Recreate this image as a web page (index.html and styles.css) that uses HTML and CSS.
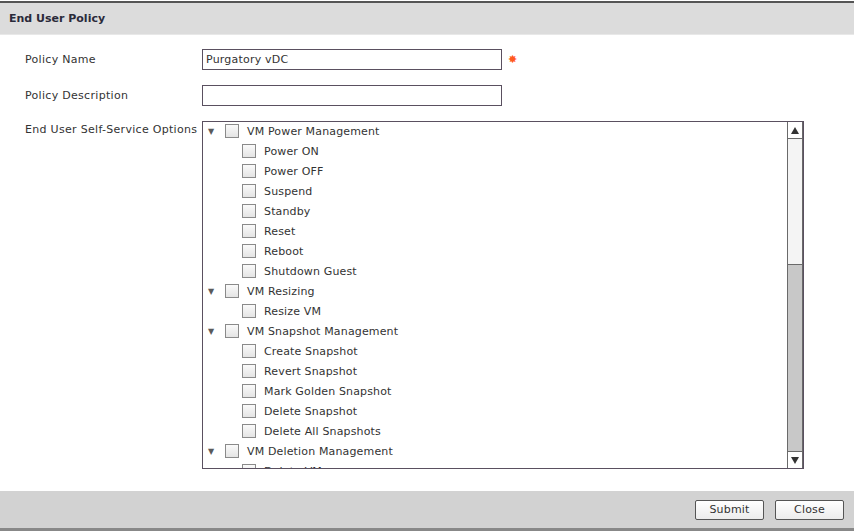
FILE: index.html
```html
<!DOCTYPE html>
<html>
<head>
<meta charset="utf-8">
<link rel="stylesheet" href="styles.css">
</head>
<body>
<div class="dialog">
  <div class="header">End User Policy</div>
  <div class="content">
    <div class="row">
      <label class="lbl">Policy Name</label>
      <input class="txt" type="text" value="Purgatory vDC">
      <span class="req">&#x2738;</span>
    </div>
    <div class="row">
      <label class="lbl">Policy Description</label>
      <input class="txt" type="text" value="">
    </div>
    <div class="row top">
      <label class="lbl lbl-top">End User Self-Service Options</label>
      <div class="listbox">
        <div class="items">
          <div class="item parent"><span class="tri">&#9660;</span><span class="cb"></span><span>VM Power Management</span></div>
          <div class="item child"><span class="cb"></span><span>Power ON</span></div>
          <div class="item child"><span class="cb"></span><span>Power OFF</span></div>
          <div class="item child"><span class="cb"></span><span>Suspend</span></div>
          <div class="item child"><span class="cb"></span><span>Standby</span></div>
          <div class="item child"><span class="cb"></span><span>Reset</span></div>
          <div class="item child"><span class="cb"></span><span>Reboot</span></div>
          <div class="item child"><span class="cb"></span><span>Shutdown Guest</span></div>
          <div class="item parent"><span class="tri">&#9660;</span><span class="cb"></span><span>VM Resizing</span></div>
          <div class="item child"><span class="cb"></span><span>Resize VM</span></div>
          <div class="item parent"><span class="tri">&#9660;</span><span class="cb"></span><span>VM Snapshot Management</span></div>
          <div class="item child"><span class="cb"></span><span>Create Snapshot</span></div>
          <div class="item child"><span class="cb"></span><span>Revert Snapshot</span></div>
          <div class="item child"><span class="cb"></span><span>Mark Golden Snapshot</span></div>
          <div class="item child"><span class="cb"></span><span>Delete Snapshot</span></div>
          <div class="item child"><span class="cb"></span><span>Delete All Snapshots</span></div>
          <div class="item parent"><span class="tri">&#9660;</span><span class="cb"></span><span>VM Deletion Management</span></div>
          <div class="item child"><span class="cb"></span><span>Delete VM</span></div>
        </div>
        <div class="scrollbar">
          <div class="sbtn"><svg width="8" height="7" viewBox="0 0 8 7"><path d="M4 0 L8 7 L0 7 Z" fill="#333"/></svg></div>
          <div class="track"></div>
          <div class="thumb"></div>
          <div class="sbtn"><svg width="8" height="7" viewBox="0 0 8 7"><path d="M0 0 L8 0 L4 7 Z" fill="#333"/></svg></div>
        </div>
      </div>
    </div>
  </div>
  <div class="footer">
    <button class="btn">Submit</button>
    <button class="btn">Close</button>
  </div>
</div>
</body>
</html>
```
FILE: styles.css
```css
* { box-sizing: border-box; }
html, body { margin: 0; padding: 0; background: #fff; }
body {
  font-family: "DejaVu Sans", Verdana, sans-serif;
  font-size: 11px;
  color: #333;
}
.dialog {
  width: 854px;
  height: 531px;
  display: flex;
  flex-direction: column;
  background: #fff;
}
.header {
  height: 34px;
  border-top: 2px solid #555;
  margin-top: 1px;
  background: #dcdcdc;
  font-weight: bold;
  color: #2a2a3a;
  padding: 9px 0 0 9px;
  font-size: 11px;
  border-bottom: 1px solid #e8e8e8;
}
.content {
  flex: 1;
  padding: 14px 0 0 25px;
  display: flex;
  flex-direction: column;
  gap: 15px;
}
.row { display: flex; align-items: center; }
.row.top { align-items: flex-start; }
.lbl {
  width: 177px;
  color: #333;
  letter-spacing: 0.3px;
  white-space: nowrap;
}
.lbl-top { padding-top: 2px; }
.txt {
  width: 300px;
  height: 21px;
  border: 1px solid #5a5060;
  padding: 0 3px;
  font-family: "DejaVu Sans", Verdana, sans-serif;
  font-size: 11px;
  letter-spacing: 0.2px;
  color: #333;
  outline: none;
  margin: 0;
}
.req {
  color: #ff5a1f;
  font-size: 11px;
  margin-left: 6px;
  font-weight: bold;
}
.listbox {
  width: 602px;
  height: 348px;
  border: 1px solid #5a5060;
  display: flex;
  overflow: hidden;
}
.items {
  flex: 1;
  margin-top: -1px;
  overflow: hidden;
}
.item {
  height: 20px;
  display: flex;
  align-items: center;
  white-space: nowrap;
  color: #333;
  letter-spacing: 0.15px;
}
.item.parent { padding-left: 5px; }
.item.child { padding-left: 39px; }
.tri {
  font-size: 8px;
  color: #5a5a5a;
  width: 17px;
  display: inline-block;
}
.cb {
  width: 14px;
  height: 14px;
  border: 1px solid #8a8a8a;
  background: linear-gradient(#fafafa, #e4e4e4);
  margin-right: 8px;
  display: inline-block;
}
.scrollbar {
  width: 16px;
  display: flex;
  flex-direction: column;
  border-left: 1px solid #6a6a6a;
  border-right: 1px solid #6a6a6a;
}
.sbtn {
  height: 17px;
  background: #fff;
  border-bottom: 1px solid #6a6a6a;
  display: flex;
  align-items: center;
  justify-content: center;
}
.sbtn:last-child { border-bottom: none; border-top: 1px solid #6a6a6a; }
.track { height: 125px; background: #f4f4f4; }
.thumb { flex: 1; background: #c8c8c8; border-top: 1px solid #6a6a6a; }
.footer {
  height: 40px;
  background: #d2d2d2;
  border-bottom: 3px solid #888;
  display: flex;
  justify-content: flex-end;
  align-items: center;
  gap: 11px;
  padding-right: 10px;
}
.btn {
  width: 69px;
  height: 20px;
  border: 1px solid #555;
  border-radius: 2px;
  background: linear-gradient(#ffffff, #ececec);
  font-family: "DejaVu Sans", Verdana, sans-serif;
  font-size: 11px;
  letter-spacing: 0.2px;
  color: #333;
  padding: 0;
}
```
